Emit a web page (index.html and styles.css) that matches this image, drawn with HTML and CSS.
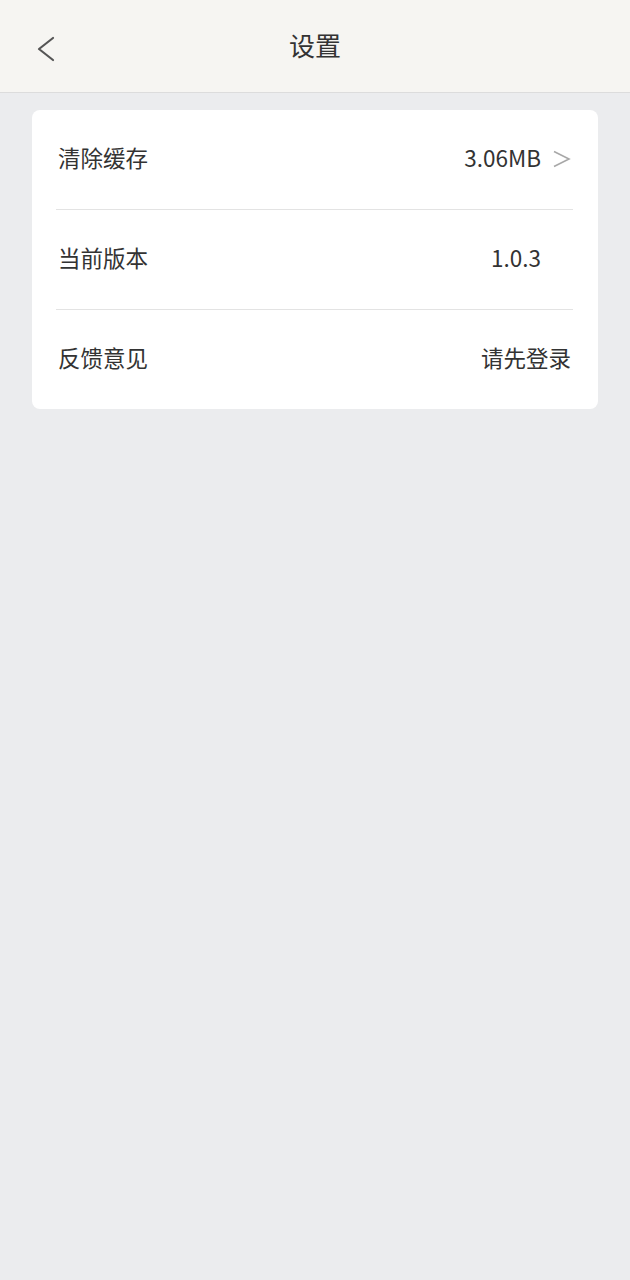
FILE: index.html
```html
<!DOCTYPE html>
<html lang="zh-CN">
<head>
<meta charset="utf-8">
<title>设置</title>
<link rel="stylesheet" href="styles.css">
</head>
<body>
<header class="topbar">
  <span class="back">
    <svg width="20" height="26" viewBox="0 0 20 26"><polyline points="17,2 3,13 17,24" fill="none" stroke="#555" stroke-width="2.2" stroke-linecap="round" stroke-linejoin="round"/></svg>
  </span>
  <h1 class="title">设置</h1>
</header>
<main class="card">
  <div class="row">
    <span class="label">清除缓存</span>
    <span class="value">3.06MB</span>
    <span class="arrow">
      <svg width="18" height="18" viewBox="0 0 18 18"><polyline points="1,1.5 16,9 1,16.5" fill="none" stroke="#a8a8a8" stroke-width="1.6" stroke-linejoin="miter"/></svg>
    </span>
  </div>
  <div class="row">
    <span class="label">当前版本</span>
    <span class="value">1.0.3</span>
    <span class="arrow"></span>
  </div>
  <div class="row last">
    <span class="label">反馈意见</span>
    <span class="value">请先登录</span>
  </div>
</main>
</body>
</html>
```
FILE: styles.css
```css
* { box-sizing: border-box; }
html, body { margin: 0; padding: 0; }
body {
  background: #ebecee;
  font-family: "Noto Sans CJK SC", "Noto Sans", sans-serif;
  color: #333;
  min-height: 1280px;
}
.topbar {
  height: 93px;
  background: #f6f5f2;
  border-bottom: 1px solid #dcdcdc;
  display: flex;
  align-items: center;
  justify-content: center;
  position: relative;
}
.back {
  position: absolute;
  left: 36px;
  top: 36px;
  display: flex;
}
.title {
  margin: 0 0 2px;
  font-size: 26px;
  font-weight: 400;
  color: #333;
  line-height: 1;
}
.card {
  margin: 17px 32px 0;
  background: #fff;
  border-radius: 8px;
}
.row {
  margin: 0 25px 0 24px;
  height: 100px;
  padding-bottom: 5px;
  display: flex;
  align-items: center;
  border-bottom: 1px solid #e3e3e3;
  font-size: 22.5px;
}
.row.last { border-bottom: none; height: 99px; }
.label { flex: 1; padding-left: 2px; }
.value { color: #333; }
.row.last .value { margin-right: 2px; }
.arrow {
  width: 32px;
  display: flex;
  justify-content: flex-end;
  padding-right: 2px;
  padding-top: 3px;
}
```
